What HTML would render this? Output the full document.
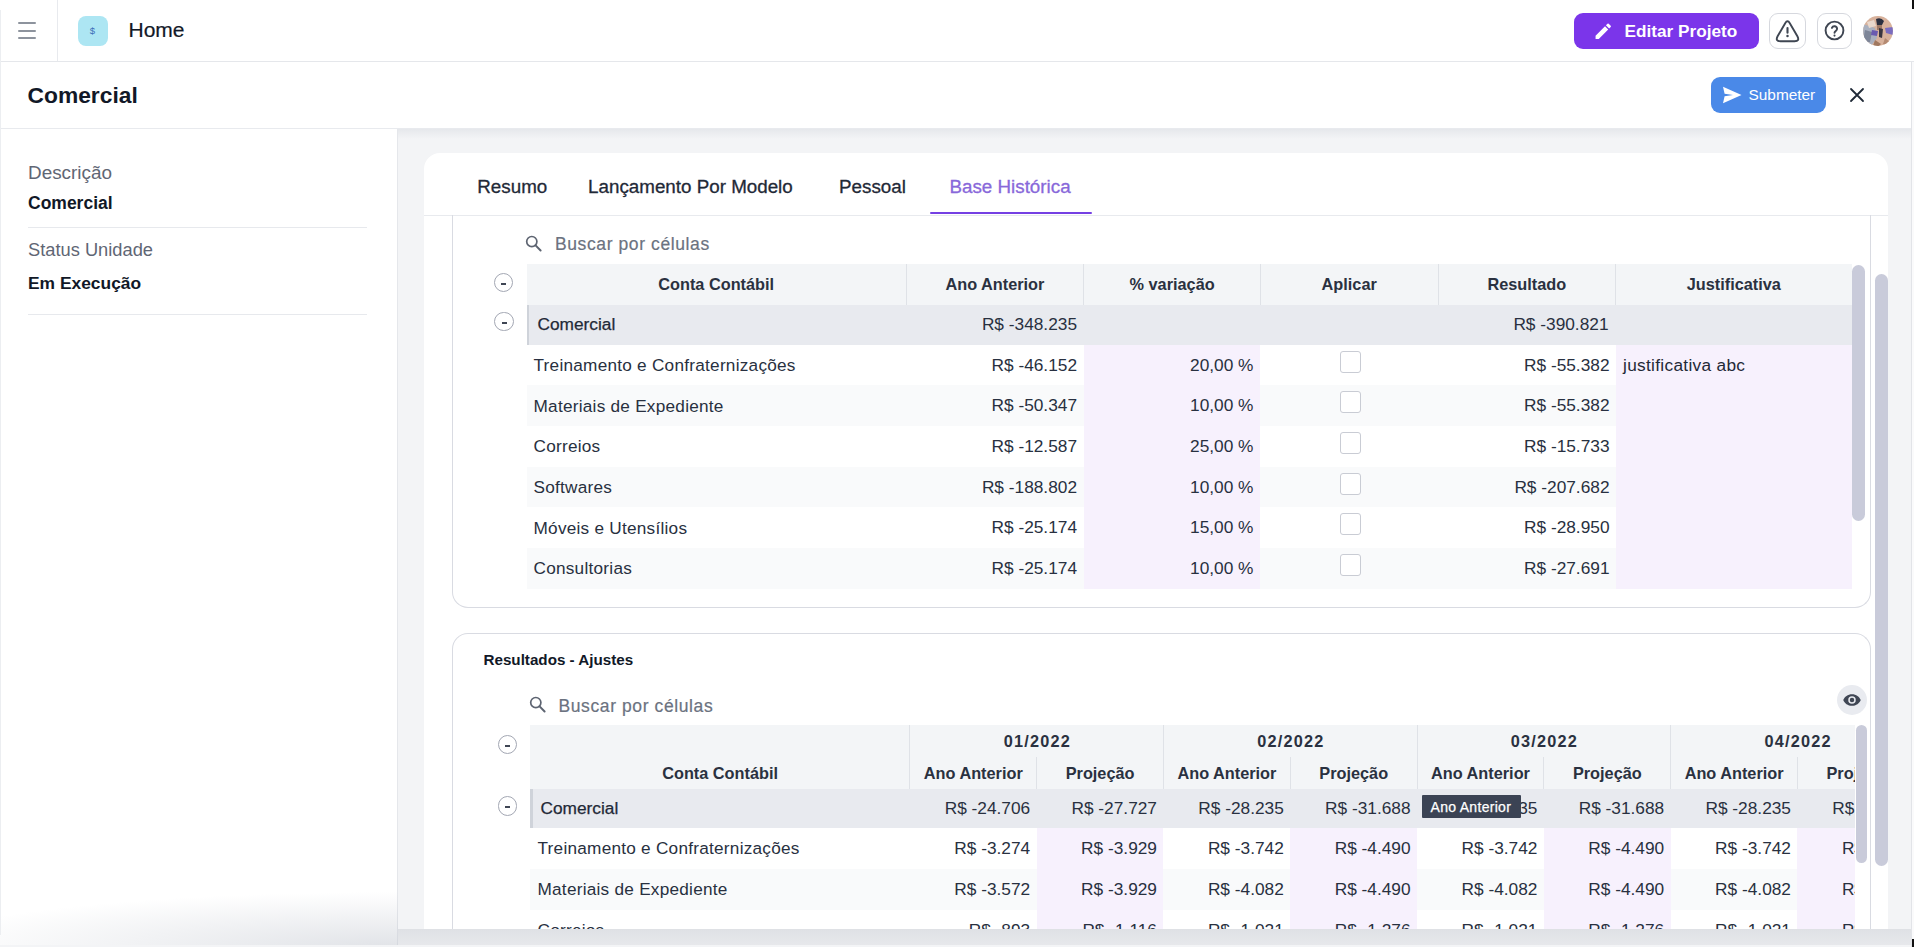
<!DOCTYPE html><html><head><meta charset="utf-8"><style>
*{margin:0;padding:0;box-sizing:border-box}
html,body{width:1914px;height:947px;overflow:hidden;background:#ffffff;font-family:"Liberation Sans", sans-serif;color:#1f2937}
body>div, .abs{position:absolute}
.t{position:absolute;white-space:nowrap;line-height:1}
</style></head><body>
<div style="left:0px;top:0px;width:1914px;height:61px;background:#ffffff"></div>
<div style="left:0px;top:61px;width:1914px;height:1px;background:#e5e7eb"></div>
<div style="left:18px;top:22px;width:17.5px;height:2px;background:#8d939d;border-radius:1px"></div>
<div style="left:18px;top:30px;width:17.5px;height:2px;background:#8d939d;border-radius:1px"></div>
<div style="left:18px;top:37px;width:17.5px;height:2px;background:#8d939d;border-radius:1px"></div>
<div style="left:57px;top:0px;width:1px;height:61px;background:#e8eaee"></div>
<div style="left:78px;top:15.5px;width:30px;height:30px;background:#ade6f3;border-radius:8px"></div>
<div class="t" style="left:89.8px;top:25.5px;font-size:9.5px;color:#3d6fb8;">$</div>
<div class="t" style="left:128.5px;top:19px;font-size:21px;color:#111827;-webkit-text-stroke:0.2px #111827;">Home</div>
<div style="left:1573.5px;top:13px;width:185px;height:36px;background:#7b35ea;border-radius:9px"></div>
<svg class="abs" style="left:1593px;top:21px" width="20.5" height="20.5" viewBox="0 0 24 24"><path d="M3 17.25V21h3.75L17.81 9.94l-3.75-3.75L3 17.25zM20.71 7.04a1 1 0 0 0 0-1.41l-2.34-2.34a1 1 0 0 0-1.41 0l-1.83 1.83 3.75 3.75 1.83-1.83z" fill="#fff"/></svg>
<div class="t" style="left:1624.5px;top:22.5px;font-size:17.2px;font-weight:bold;color:#ffffff;">Editar Projeto</div>
<div style="left:1768.5px;top:13px;width:37px;height:35.5px;border:1.5px solid #d6d8de;border-radius:9px;background:#fff"></div>
<svg class="abs" style="left:1775px;top:18.5px" width="25" height="25" viewBox="0 0 25 25"><path d="M10.2 4.2Q12.5 0.4 14.8 4.2L22.4 17.2Q25 22.2 19.6 22.2L5.4 22.2Q0 22.2 2.6 17.2Z" fill="none" stroke="#3f4652" stroke-width="1.9" stroke-linejoin="round"/><path d="M12.5 9v4.8" stroke="#3f4652" stroke-width="2.1" stroke-linecap="round"/><circle cx="12.5" cy="17" r="1.25" fill="#3f4652"/></svg>
<div style="left:1817px;top:13px;width:34.5px;height:35.5px;border:1.5px solid #d6d8de;border-radius:9px;background:#fff"></div>
<svg class="abs" style="left:1823px;top:19px" width="23" height="23" viewBox="0 0 24 24"><circle cx="12" cy="12" r="9.3" fill="none" stroke="#3f4652" stroke-width="2"/><path d="M9.3 9.3a2.8 2.8 0 0 1 5.4 1c0 1.9-2.7 2.3-2.7 4" fill="none" stroke="#3f4652" stroke-width="2" stroke-linecap="round"/><circle cx="12" cy="17.3" r="1.1" fill="#3f4652"/></svg>
<svg class="abs" style="left:1863px;top:15.7px" width="30" height="30" viewBox="0 0 30 30"><defs><clipPath id="av"><circle cx="15" cy="15" r="14.9"/></clipPath></defs><g clip-path="url(#av)"><rect width="30" height="30" fill="#d8b29c"/><path d="M0 8 L12 12 L14 22 L8 30 L0 30Z" fill="#a9b0bf"/><path d="M2 14 L9 16 L7 26 L0 26Z" fill="#7e8698"/><path d="M4 6 L11 4 L13 10 L6 12Z" fill="#e9d8cc"/><path d="M9 14 L15 15 L14 20 L8 19Z" fill="#6a5ab0"/><path d="M22 12 L30 11 L30 19 L23 17Z" fill="#7a6cc0"/><path d="M13 3 Q18 1 21 5 L19 9 L14 9Z" fill="#2b3040"/><path d="M14 9 L19 9 L19 14 L14 14Z" fill="#a07a66"/><path d="M16 12 L20 13 L19 22 L16 21Z" fill="#3a3640"/><path d="M12 24 L18 28 L16 30 L10 30Z" fill="#a0785f"/><path d="M22 22 L27 26 L25 30 L20 28Z" fill="#b48a72"/></g></svg>
<div style="left:0px;top:62px;width:1912px;height:66px;background:#ffffff;border-radius:10px 10px 0 0"></div>
<div style="left:0px;top:128px;width:1912px;height:1px;background:#e8eaee"></div>
<div class="t" style="left:27.5px;top:84px;font-size:22.8px;font-weight:bold;color:#111827;">Comercial</div>
<div style="left:1711px;top:77px;width:114.5px;height:36px;background:#4a89e8;border-radius:9px"></div>
<svg class="abs" style="left:1722px;top:86px" width="20" height="18" viewBox="0 0 20 18"><path d="M1 0.8 19.5 9 1 17.2 2.6 10.2 11 9 2.6 7.8z" fill="#fff"/></svg>
<div class="t" style="left:1748.5px;top:87.3px;font-size:15.4px;color:#ffffff;">Submeter</div>
<svg class="abs" style="left:1849px;top:87px" width="16" height="16" viewBox="0 0 16 16"><path d="M2 2 14 14M14 2 2 14" stroke="#1f2937" stroke-width="1.8" stroke-linecap="round"/></svg>
<div style="left:0px;top:129px;width:397px;height:818px;background:#ffffff"></div>
<div style="left:397px;top:129px;width:1px;height:818px;background:#e5e7eb"></div>
<div class="t" style="left:28px;top:164px;font-size:18.9px;color:#5f6674;">Descrição</div>
<div class="t" style="left:28px;top:194.5px;font-size:17.5px;font-weight:bold;color:#111827;">Comercial</div>
<div style="left:28px;top:226.5px;width:339px;height:1px;background:#e7e9ed"></div>
<div class="t" style="left:28px;top:241px;font-size:18.3px;color:#5f6674;">Status Unidade</div>
<div class="t" style="left:28px;top:275px;font-size:17.4px;font-weight:bold;color:#111827;">Em Execução</div>
<div style="left:28px;top:313.5px;width:339px;height:1px;background:#e7e9ed"></div>
<div style="left:398px;top:129px;width:1514px;height:800px;background:#f3f4f6"></div>
<div style="left:398px;top:129px;width:1514px;height:10px;background:linear-gradient(to bottom,rgba(170,176,188,0.18),rgba(170,176,188,0))"></div>
<div style="left:424px;top:153px;width:1464px;height:776px;background:#ffffff;border-radius:16px 16px 0 0"></div>
<div class="t" style="left:477.3px;top:177.5px;font-size:18.8px;color:#1f2937;-webkit-text-stroke:0.3px #1f2937;">Resumo</div>
<div class="t" style="left:588.1px;top:177.5px;font-size:18.8px;color:#1f2937;-webkit-text-stroke:0.3px #1f2937;">Lançamento Por Modelo</div>
<div class="t" style="left:839.1px;top:177.5px;font-size:18.8px;color:#1f2937;-webkit-text-stroke:0.3px #1f2937;">Pessoal</div>
<div class="t" style="left:949.5px;top:177.5px;font-size:18.8px;color:#8868da;-webkit-text-stroke:0.3px #8868da;">Base Histórica</div>
<div style="left:424px;top:214.5px;width:1464px;height:1px;background:#e8eaee"></div>
<div style="left:930px;top:211.8px;width:162px;height:2.7px;background:#7540e3;border-radius:1.5px"></div>
<div class="abs" style="left:424px;top:215px;width:1464px;height:714px;overflow:hidden">
<div class="abs" style="left:28.0px;top:-25.0px;width:1419.0px;height:417.5px;border:1.5px solid #d9dbe2;border-top:none;border-radius:0 0 16px 16px"></div>
<svg class="abs" style="left:101px;top:19.5px" width="18" height="18" viewBox="0 0 18 18"><circle cx="6.8" cy="6.6" r="5.1" fill="none" stroke="#5d6471" stroke-width="1.7"/><path d="M10.6 10.4 15.6 15.5" stroke="#5d6471" stroke-width="2" stroke-linecap="round"/></svg>
<div class="t" style="left:131.0px;top:21.0px;font-size:17.5px;letter-spacing:0.6px;color:#6b7280;-webkit-text-stroke:0.2px #6b7280;">Buscar por células</div>
<div class="abs" style="left:102.5px;top:49.0px;width:1325.5px;height:40.5px;background:#f3f5f7"></div>
<div class="abs" style="left:481.5px;top:49.0px;width:1.0px;height:40.5px;background:#dfe2e7"></div>
<div class="abs" style="left:659.3px;top:49.0px;width:1.0px;height:40.5px;background:#dfe2e7"></div>
<div class="abs" style="left:835.9px;top:49.0px;width:1.0px;height:40.5px;background:#dfe2e7"></div>
<div class="abs" style="left:1013.6px;top:49.0px;width:1.0px;height:40.5px;background:#dfe2e7"></div>
<div class="abs" style="left:1191.0px;top:49.0px;width:1.0px;height:40.5px;background:#dfe2e7"></div>
<div class="t" style="left:92.2px;width:400px;text-align:center;top:61.0px;font-size:16.3px;font-weight:bold;color:#2a3140;">Conta Contábil</div>
<div class="t" style="left:370.9px;width:400px;text-align:center;top:61.0px;font-size:16.3px;font-weight:bold;color:#2a3140;">Ano Anterior</div>
<div class="t" style="left:548.1px;width:400px;text-align:center;top:61.0px;font-size:16.3px;font-weight:bold;color:#2a3140;">% variação</div>
<div class="t" style="left:725.2px;width:400px;text-align:center;top:61.0px;font-size:16.3px;font-weight:bold;color:#2a3140;">Aplicar</div>
<div class="t" style="left:902.8px;width:400px;text-align:center;top:61.0px;font-size:16.3px;font-weight:bold;color:#2a3140;">Resultado</div>
<div class="t" style="left:1109.8px;width:400px;text-align:center;top:61.0px;font-size:16.3px;font-weight:bold;color:#2a3140;">Justificativa</div>
<div class="abs" style="left:70.1px;top:58.1px;width:19.2px;height:19.2px;border:1.3px solid #a3a7b3;border-radius:50%"></div>
<div class="abs" style="left:77.2px;top:67.9px;width:5.0px;height:2.0px;background:#3f4654"></div>
<div class="abs" style="left:102.5px;top:89.5px;width:1325.5px;height:40.0px;background:#e8eaef"></div>
<div class="abs" style="left:102.5px;top:89.5px;width:2.5px;height:40.0px;background:#cfd3da"></div>
<div class="abs" style="left:70.4px;top:97.2px;width:19.2px;height:19.2px;border:1.3px solid #a3a7b3;border-radius:50%"></div>
<div class="abs" style="left:77.5px;top:107.0px;width:5.0px;height:2.0px;background:#3f4654"></div>
<div class="t" style="left:113.5px;top:101.0px;font-size:17.3px;color:#1f2937;-webkit-text-stroke:0.25px #1f2937;">Comercial</div>
<div class="t" style="right:811.0px;top:101.0px;font-size:17.3px;color:#283040;">R$ -348.235</div>
<div class="t" style="right:279.5px;top:101.0px;font-size:17.3px;color:#283040;">R$ -390.821</div>
<div class="abs" style="left:102.5px;top:129.5px;width:1325.5px;height:40.7px;background:#ffffff"></div>
<div class="abs" style="left:659.8px;top:129.5px;width:176.6px;height:40.7px;background:#f7f1fd"></div>
<div class="abs" style="left:1191.5px;top:129.5px;width:236.5px;height:40.7px;background:#f7f1fd"></div>
<div class="t" style="left:109.5px;top:141.8px;font-size:17.2px;letter-spacing:0.25px;color:#283040;">Treinamento e Confraternizações</div>
<div class="t" style="right:811.0px;top:141.5px;font-size:17.3px;color:#283040;">R$ -46.152</div>
<div class="t" style="right:634.5px;top:141.5px;font-size:17.3px;color:#283040;">20,00 %</div>
<div class="abs" style="left:915.5px;top:135.5px;width:21.5px;height:22.0px;border:1.5px solid #c9ccd4;border-radius:3px;background:#fff"></div>
<div class="t" style="right:278.5px;top:141.5px;font-size:17.3px;color:#283040;">R$ -55.382</div>
<div class="t" style="left:1199.0px;top:141.5px;font-size:17.3px;letter-spacing:0.3px;color:#1f2937;">justificativa abc</div>
<div class="abs" style="left:102.5px;top:170.2px;width:1325.5px;height:40.7px;background:#f9fafb"></div>
<div class="abs" style="left:659.8px;top:170.2px;width:176.6px;height:40.7px;background:#f7f1fd"></div>
<div class="abs" style="left:1191.5px;top:170.2px;width:236.5px;height:40.7px;background:#f7f1fd"></div>
<div class="t" style="left:109.5px;top:182.5px;font-size:17.2px;letter-spacing:0.25px;color:#283040;">Materiais de Expediente</div>
<div class="t" style="right:811.0px;top:182.2px;font-size:17.3px;color:#283040;">R$ -50.347</div>
<div class="t" style="right:634.5px;top:182.2px;font-size:17.3px;color:#283040;">10,00 %</div>
<div class="abs" style="left:915.5px;top:176.2px;width:21.5px;height:22.0px;border:1.5px solid #c9ccd4;border-radius:3px;background:#fff"></div>
<div class="t" style="right:278.5px;top:182.2px;font-size:17.3px;color:#283040;">R$ -55.382</div>
<div class="abs" style="left:102.5px;top:210.9px;width:1325.5px;height:40.7px;background:#ffffff"></div>
<div class="abs" style="left:659.8px;top:210.9px;width:176.6px;height:40.7px;background:#f7f1fd"></div>
<div class="abs" style="left:1191.5px;top:210.9px;width:236.5px;height:40.7px;background:#f7f1fd"></div>
<div class="t" style="left:109.5px;top:223.2px;font-size:17.2px;letter-spacing:0.25px;color:#283040;">Correios</div>
<div class="t" style="right:811.0px;top:222.9px;font-size:17.3px;color:#283040;">R$ -12.587</div>
<div class="t" style="right:634.5px;top:222.9px;font-size:17.3px;color:#283040;">25,00 %</div>
<div class="abs" style="left:915.5px;top:216.9px;width:21.5px;height:22.0px;border:1.5px solid #c9ccd4;border-radius:3px;background:#fff"></div>
<div class="t" style="right:278.5px;top:222.9px;font-size:17.3px;color:#283040;">R$ -15.733</div>
<div class="abs" style="left:102.5px;top:251.6px;width:1325.5px;height:40.7px;background:#f9fafb"></div>
<div class="abs" style="left:659.8px;top:251.6px;width:176.6px;height:40.7px;background:#f7f1fd"></div>
<div class="abs" style="left:1191.5px;top:251.6px;width:236.5px;height:40.7px;background:#f7f1fd"></div>
<div class="t" style="left:109.5px;top:263.9px;font-size:17.2px;letter-spacing:0.25px;color:#283040;">Softwares</div>
<div class="t" style="right:811.0px;top:263.6px;font-size:17.3px;color:#283040;">R$ -188.802</div>
<div class="t" style="right:634.5px;top:263.6px;font-size:17.3px;color:#283040;">10,00 %</div>
<div class="abs" style="left:915.5px;top:257.6px;width:21.5px;height:22.0px;border:1.5px solid #c9ccd4;border-radius:3px;background:#fff"></div>
<div class="t" style="right:278.5px;top:263.6px;font-size:17.3px;color:#283040;">R$ -207.682</div>
<div class="abs" style="left:102.5px;top:292.3px;width:1325.5px;height:40.7px;background:#ffffff"></div>
<div class="abs" style="left:659.8px;top:292.3px;width:176.6px;height:40.7px;background:#f7f1fd"></div>
<div class="abs" style="left:1191.5px;top:292.3px;width:236.5px;height:40.7px;background:#f7f1fd"></div>
<div class="t" style="left:109.5px;top:304.6px;font-size:17.2px;letter-spacing:0.25px;color:#283040;">Móveis e Utensílios</div>
<div class="t" style="right:811.0px;top:304.3px;font-size:17.3px;color:#283040;">R$ -25.174</div>
<div class="t" style="right:634.5px;top:304.3px;font-size:17.3px;color:#283040;">15,00 %</div>
<div class="abs" style="left:915.5px;top:298.3px;width:21.5px;height:22.0px;border:1.5px solid #c9ccd4;border-radius:3px;background:#fff"></div>
<div class="t" style="right:278.5px;top:304.3px;font-size:17.3px;color:#283040;">R$ -28.950</div>
<div class="abs" style="left:102.5px;top:333.0px;width:1325.5px;height:40.7px;background:#f9fafb"></div>
<div class="abs" style="left:659.8px;top:333.0px;width:176.6px;height:40.7px;background:#f7f1fd"></div>
<div class="abs" style="left:1191.5px;top:333.0px;width:236.5px;height:40.7px;background:#f7f1fd"></div>
<div class="t" style="left:109.5px;top:345.3px;font-size:17.2px;letter-spacing:0.25px;color:#283040;">Consultorias</div>
<div class="t" style="right:811.0px;top:345.0px;font-size:17.3px;color:#283040;">R$ -25.174</div>
<div class="t" style="right:634.5px;top:345.0px;font-size:17.3px;color:#283040;">10,00 %</div>
<div class="abs" style="left:915.5px;top:339.0px;width:21.5px;height:22.0px;border:1.5px solid #c9ccd4;border-radius:3px;background:#fff"></div>
<div class="t" style="right:278.5px;top:345.0px;font-size:17.3px;color:#283040;">R$ -27.691</div>
<div class="abs" style="left:1428.0px;top:49.5px;width:13.0px;height:256.5px;background:#c9cbda;border-radius:7px"></div>
<div class="abs" style="left:28.0px;top:417.5px;width:1419.0px;height:400.0px;border:1.5px solid #d9dbe2;border-bottom:none;border-radius:16px 16px 0 0"></div>
<div class="t" style="left:59.5px;top:437.0px;font-size:15.2px;font-weight:bold;color:#111827;">Resultados - Ajustes</div>
<svg class="abs" style="left:105px;top:480.5px" width="18" height="18" viewBox="0 0 18 18"><circle cx="6.8" cy="6.6" r="5.1" fill="none" stroke="#5d6471" stroke-width="1.7"/><path d="M10.6 10.4 15.6 15.5" stroke="#5d6471" stroke-width="2" stroke-linecap="round"/></svg>
<div class="t" style="left:134.5px;top:483.0px;font-size:17.5px;letter-spacing:0.6px;color:#6b7280;-webkit-text-stroke:0.2px #6b7280;">Buscar por células</div>
<div class="abs" style="left:1413.0px;top:469.7px;width:30.0px;height:30.0px;background:#e9ebf0;border-radius:50%"></div>
<svg class="abs" style="left:1418px;top:474.5px" width="20" height="20" viewBox="0 0 24 24"><path d="M12 5C7 5 3 8.1 1.5 12 3 15.9 7 19 12 19s9-3.1 10.5-7C21 8.1 17 5 12 5zm0 11.5a4.5 4.5 0 1 1 0-9 4.5 4.5 0 0 1 0 9zm0-7.2a2.7 2.7 0 1 0 0 5.4 2.7 2.7 0 0 0 0-5.4z" fill="#3f4654"/></svg>
<div class="abs" style="left:73.9px;top:519.8px;width:19.2px;height:19.2px;border:1.3px solid #a3a7b3;border-radius:50%"></div>
<div class="abs" style="left:81.0px;top:529.6px;width:5.0px;height:2.0px;background:#3f4654"></div>
<div class="abs" style="left:74.2px;top:581.4px;width:19.2px;height:19.2px;border:1.3px solid #a3a7b3;border-radius:50%"></div>
<div class="abs" style="left:81.3px;top:591.2px;width:5.0px;height:2.0px;background:#3f4654"></div>
<div class="abs" style="left:106.3px;top:509.8px;width:1324.7px;height:300px;overflow:hidden">
<div class="abs" style="left:0.0px;top:0.0px;width:1400.0px;height:63.9px;background:#f3f5f7"></div>
<div class="abs" style="left:379.1px;top:0.0px;width:1.0px;height:63.9px;background:#dfe2e7"></div>
<div class="t" style="left:-10.2px;width:400px;text-align:center;top:40.2px;font-size:16.3px;font-weight:bold;color:#2a3140;">Conta Contábil</div>
<div class="abs" style="left:632.7px;top:0.0px;width:1.0px;height:63.9px;background:#dfe2e7"></div>
<div class="abs" style="left:505.9px;top:32.2px;width:1.0px;height:31.7px;background:#dfe2e7"></div>
<div class="t" style="left:307.0px;width:400px;text-align:center;top:8.2px;font-size:16.3px;letter-spacing:1.2px;font-weight:bold;color:#2a3140;">01/2022</div>
<div class="t" style="left:243.0px;width:400px;text-align:center;top:40.2px;font-size:16.3px;font-weight:bold;color:#2a3140;">Ano Anterior</div>
<div class="t" style="left:369.8px;width:400px;text-align:center;top:40.2px;font-size:16.3px;font-weight:bold;color:#2a3140;">Projeção</div>
<div class="abs" style="left:886.3px;top:0.0px;width:1.0px;height:63.9px;background:#dfe2e7"></div>
<div class="abs" style="left:759.5px;top:32.2px;width:1.0px;height:31.7px;background:#dfe2e7"></div>
<div class="t" style="left:560.6px;width:400px;text-align:center;top:8.2px;font-size:16.3px;letter-spacing:1.2px;font-weight:bold;color:#2a3140;">02/2022</div>
<div class="t" style="left:496.6px;width:400px;text-align:center;top:40.2px;font-size:16.3px;font-weight:bold;color:#2a3140;">Ano Anterior</div>
<div class="t" style="left:623.4px;width:400px;text-align:center;top:40.2px;font-size:16.3px;font-weight:bold;color:#2a3140;">Projeção</div>
<div class="abs" style="left:1139.9px;top:0.0px;width:1.0px;height:63.9px;background:#dfe2e7"></div>
<div class="abs" style="left:1013.1px;top:32.2px;width:1.0px;height:31.7px;background:#dfe2e7"></div>
<div class="t" style="left:814.2px;width:400px;text-align:center;top:8.2px;font-size:16.3px;letter-spacing:1.2px;font-weight:bold;color:#2a3140;">03/2022</div>
<div class="t" style="left:750.2px;width:400px;text-align:center;top:40.2px;font-size:16.3px;font-weight:bold;color:#2a3140;">Ano Anterior</div>
<div class="t" style="left:877.0px;width:400px;text-align:center;top:40.2px;font-size:16.3px;font-weight:bold;color:#2a3140;">Projeção</div>
<div class="abs" style="left:1393.5px;top:0.0px;width:1.0px;height:63.9px;background:#dfe2e7"></div>
<div class="abs" style="left:1266.7px;top:32.2px;width:1.0px;height:31.7px;background:#dfe2e7"></div>
<div class="t" style="left:1067.8px;width:400px;text-align:center;top:8.2px;font-size:16.3px;letter-spacing:1.2px;font-weight:bold;color:#2a3140;">04/2022</div>
<div class="t" style="left:1003.8px;width:400px;text-align:center;top:40.2px;font-size:16.3px;font-weight:bold;color:#2a3140;">Ano Anterior</div>
<div class="t" style="left:1130.6px;width:400px;text-align:center;top:40.2px;font-size:16.3px;font-weight:bold;color:#2a3140;">Projeção</div>
<div class="abs" style="left:0.0px;top:63.9px;width:1400.0px;height:39.5px;background:#e8eaef"></div>
<div class="abs" style="left:0.0px;top:63.9px;width:2.5px;height:39.5px;background:#cfd3da"></div>
<div class="t" style="left:10.2px;top:75.2px;font-size:17.3px;color:#1f2937;-webkit-text-stroke:0.25px #1f2937;">Comercial</div>
<div class="t" style="left:199.9px;width:300px;text-align:right;top:75.2px;font-size:17.3px;color:#283040;">R$ -24.706</div>
<div class="t" style="left:326.7px;width:300px;text-align:right;top:75.2px;font-size:17.3px;color:#283040;">R$ -27.727</div>
<div class="t" style="left:453.5px;width:300px;text-align:right;top:75.2px;font-size:17.3px;color:#283040;">R$ -28.235</div>
<div class="t" style="left:580.3px;width:300px;text-align:right;top:75.2px;font-size:17.3px;color:#283040;">R$ -31.688</div>
<div class="t" style="left:707.1px;width:300px;text-align:right;top:75.2px;font-size:17.3px;color:#283040;">R$ -28.235</div>
<div class="t" style="left:833.9px;width:300px;text-align:right;top:75.2px;font-size:17.3px;color:#283040;">R$ -31.688</div>
<div class="t" style="left:960.7px;width:300px;text-align:right;top:75.2px;font-size:17.3px;color:#283040;">R$ -28.235</div>
<div class="t" style="left:1087.5px;width:300px;text-align:right;top:75.2px;font-size:17.3px;color:#283040;">R$ -31.688</div>
<div class="abs" style="left:0.0px;top:103.4px;width:1400.0px;height:40.7px;background:#ffffff"></div>
<div class="abs" style="left:506.4px;top:103.4px;width:126.8px;height:40.7px;background:#f7f1fd"></div>
<div class="abs" style="left:760.0px;top:103.4px;width:126.8px;height:40.7px;background:#f7f1fd"></div>
<div class="abs" style="left:1013.6px;top:103.4px;width:126.8px;height:40.7px;background:#f7f1fd"></div>
<div class="abs" style="left:1267.2px;top:103.4px;width:126.8px;height:40.7px;background:#f7f1fd"></div>
<div class="t" style="left:7.2px;top:115.7px;font-size:17.2px;letter-spacing:0.25px;color:#283040;">Treinamento e Confraternizações</div>
<div class="t" style="left:199.9px;width:300px;text-align:right;top:115.4px;font-size:17.3px;color:#283040;">R$ -3.274</div>
<div class="t" style="left:326.7px;width:300px;text-align:right;top:115.4px;font-size:17.3px;color:#283040;">R$ -3.929</div>
<div class="t" style="left:453.5px;width:300px;text-align:right;top:115.4px;font-size:17.3px;color:#283040;">R$ -3.742</div>
<div class="t" style="left:580.3px;width:300px;text-align:right;top:115.4px;font-size:17.3px;color:#283040;">R$ -4.490</div>
<div class="t" style="left:707.1px;width:300px;text-align:right;top:115.4px;font-size:17.3px;color:#283040;">R$ -3.742</div>
<div class="t" style="left:833.9px;width:300px;text-align:right;top:115.4px;font-size:17.3px;color:#283040;">R$ -4.490</div>
<div class="t" style="left:960.7px;width:300px;text-align:right;top:115.4px;font-size:17.3px;color:#283040;">R$ -3.742</div>
<div class="t" style="left:1087.5px;width:300px;text-align:right;top:115.4px;font-size:17.3px;color:#283040;">R$ -4.490</div>
<div class="abs" style="left:0.0px;top:144.1px;width:1400.0px;height:40.7px;background:#f9fafb"></div>
<div class="abs" style="left:506.4px;top:144.1px;width:126.8px;height:40.7px;background:#f7f1fd"></div>
<div class="abs" style="left:760.0px;top:144.1px;width:126.8px;height:40.7px;background:#f7f1fd"></div>
<div class="abs" style="left:1013.6px;top:144.1px;width:126.8px;height:40.7px;background:#f7f1fd"></div>
<div class="abs" style="left:1267.2px;top:144.1px;width:126.8px;height:40.7px;background:#f7f1fd"></div>
<div class="t" style="left:7.2px;top:156.4px;font-size:17.2px;letter-spacing:0.25px;color:#283040;">Materiais de Expediente</div>
<div class="t" style="left:199.9px;width:300px;text-align:right;top:156.1px;font-size:17.3px;color:#283040;">R$ -3.572</div>
<div class="t" style="left:326.7px;width:300px;text-align:right;top:156.1px;font-size:17.3px;color:#283040;">R$ -3.929</div>
<div class="t" style="left:453.5px;width:300px;text-align:right;top:156.1px;font-size:17.3px;color:#283040;">R$ -4.082</div>
<div class="t" style="left:580.3px;width:300px;text-align:right;top:156.1px;font-size:17.3px;color:#283040;">R$ -4.490</div>
<div class="t" style="left:707.1px;width:300px;text-align:right;top:156.1px;font-size:17.3px;color:#283040;">R$ -4.082</div>
<div class="t" style="left:833.9px;width:300px;text-align:right;top:156.1px;font-size:17.3px;color:#283040;">R$ -4.490</div>
<div class="t" style="left:960.7px;width:300px;text-align:right;top:156.1px;font-size:17.3px;color:#283040;">R$ -4.082</div>
<div class="t" style="left:1087.5px;width:300px;text-align:right;top:156.1px;font-size:17.3px;color:#283040;">R$ -4.490</div>
<div class="abs" style="left:0.0px;top:184.8px;width:1400.0px;height:40.7px;background:#ffffff"></div>
<div class="abs" style="left:506.4px;top:184.8px;width:126.8px;height:40.7px;background:#f7f1fd"></div>
<div class="abs" style="left:760.0px;top:184.8px;width:126.8px;height:40.7px;background:#f7f1fd"></div>
<div class="abs" style="left:1013.6px;top:184.8px;width:126.8px;height:40.7px;background:#f7f1fd"></div>
<div class="abs" style="left:1267.2px;top:184.8px;width:126.8px;height:40.7px;background:#f7f1fd"></div>
<div class="t" style="left:7.2px;top:197.1px;font-size:17.2px;letter-spacing:0.25px;color:#283040;">Correios</div>
<div class="t" style="left:199.9px;width:300px;text-align:right;top:196.8px;font-size:17.3px;color:#283040;">R$ -893</div>
<div class="t" style="left:326.7px;width:300px;text-align:right;top:196.8px;font-size:17.3px;color:#283040;">R$ -1.116</div>
<div class="t" style="left:453.5px;width:300px;text-align:right;top:196.8px;font-size:17.3px;color:#283040;">R$ -1.021</div>
<div class="t" style="left:580.3px;width:300px;text-align:right;top:196.8px;font-size:17.3px;color:#283040;">R$ -1.276</div>
<div class="t" style="left:707.1px;width:300px;text-align:right;top:196.8px;font-size:17.3px;color:#283040;">R$ -1.021</div>
<div class="t" style="left:833.9px;width:300px;text-align:right;top:196.8px;font-size:17.3px;color:#283040;">R$ -1.276</div>
<div class="t" style="left:960.7px;width:300px;text-align:right;top:196.8px;font-size:17.3px;color:#283040;">R$ -1.021</div>
<div class="t" style="left:1087.5px;width:300px;text-align:right;top:196.8px;font-size:17.3px;color:#283040;">R$ -1.276</div>
</div>
<div class="abs" style="left:1431.5px;top:510.0px;width:11.5px;height:138.0px;background:#c9cbda;border-radius:6px"></div>
<div class="abs" style="left:998.0px;top:580.0px;width:99.0px;height:22.5px;background:#3b4354;border-radius:1px"></div>
<div class="t" style="left:1006.5px;top:584.5px;font-size:14px;letter-spacing:0.3px;color:#ffffff;-webkit-text-stroke:0.25px #fff;">Ano Anterior</div>
<div class="abs" style="left:1450.8px;top:59.0px;width:13.0px;height:592.0px;background:#c9cbda;border-radius:7px"></div>
</div>
<div style="left:398px;top:929px;width:1514px;height:18px;background:linear-gradient(to bottom,#dfe1e5,#e8e9ec)"></div>
<div class="abs" style="left:0;top:880px;width:398px;height:67px;background:radial-gradient(ellipse 480px 55px at 398px 67px,rgba(200,204,212,0.55),rgba(200,204,212,0) 100%)"></div>
<div style="left:0px;top:945px;width:1914px;height:2px;background:#f3f4f6"></div>
<div style="left:1911px;top:62px;width:1px;height:885px;background:#e2e4e8"></div>
<div style="left:1912px;top:62px;width:2px;height:885px;background:#fafafb"></div>
<div style="left:0px;top:10px;width:1px;height:925px;background:#eceef1"></div>
<div style="left:1912px;top:0px;width:2px;height:9px;background:#111"></div>
<div style="left:1912px;top:939px;width:2px;height:8px;background:#111"></div>
</body></html>
